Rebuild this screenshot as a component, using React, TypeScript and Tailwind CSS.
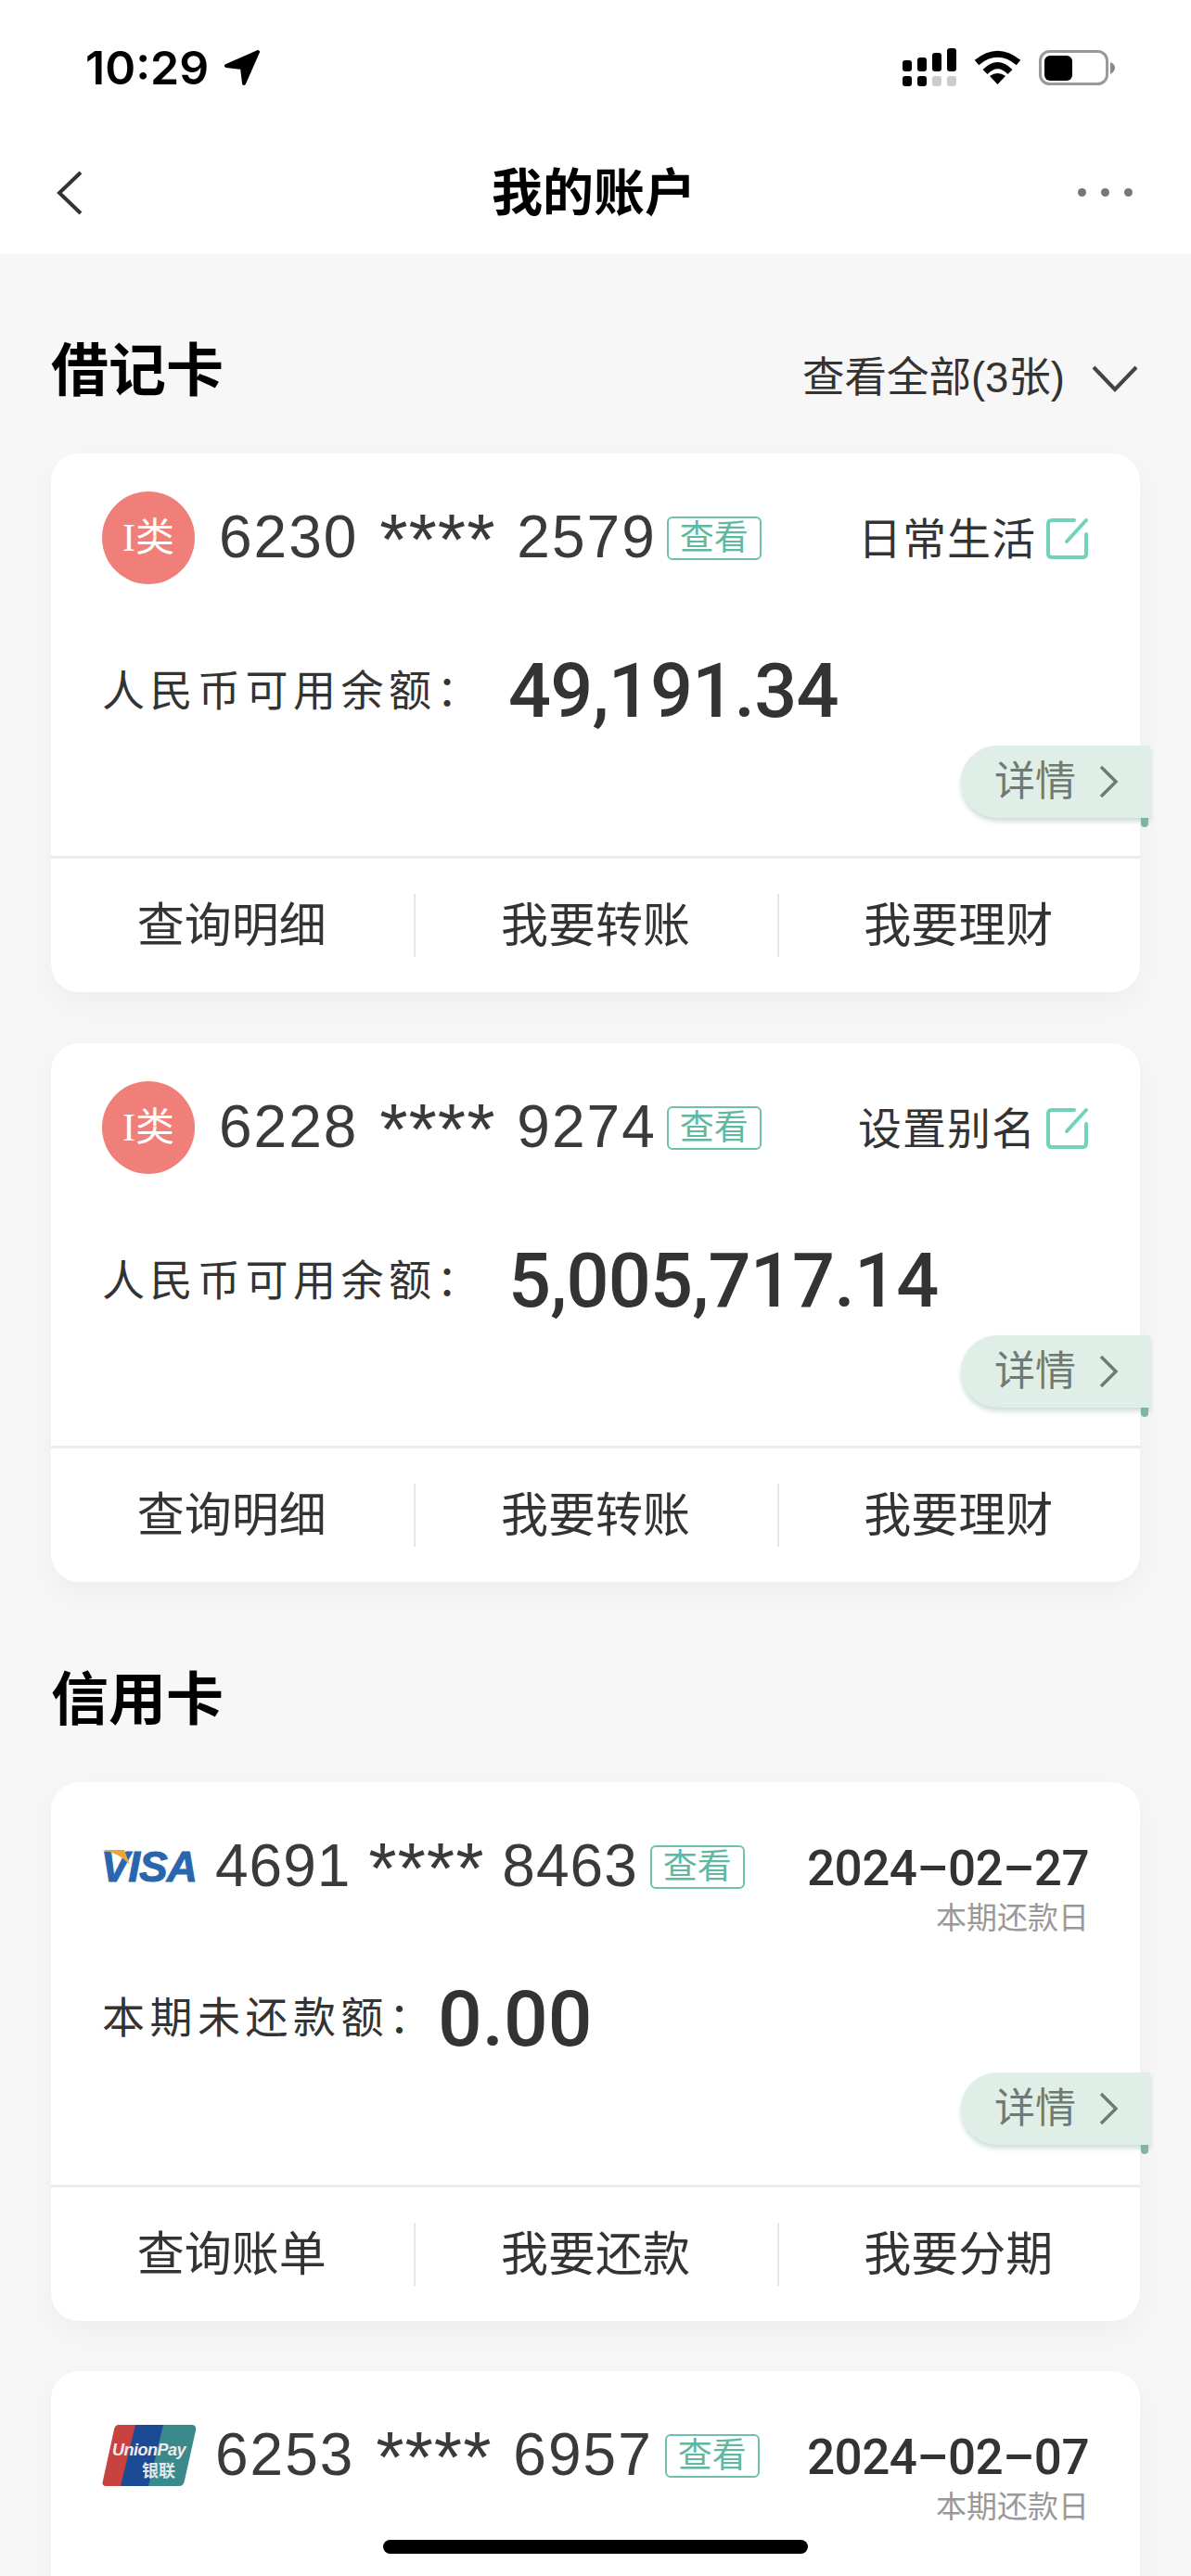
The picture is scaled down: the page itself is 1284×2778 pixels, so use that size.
type Account = {
  number: string;
  alias: string;
  label: string;
  amount: string;
  actions: string[];
};

const DEBIT_CARDS: Account[] = [
  {
    number: "6230 **** 2579",
    alias: "日常生活",
    label: "人民币可用余额：",
    amount: "49,191.34",
    actions: ["查询明细", "我要转账", "我要理财"],
  },
  {
    number: "6228 **** 9274",
    alias: "设置别名",
    label: "人民币可用余额：",
    amount: "5,005,717.14",
    actions: ["查询明细", "我要转账", "我要理财"],
  },
];

function StatusBar() {
  return (
    <div className="flex h-[145px] items-center justify-between pl-[92px] pr-[82px]">
      <div className="flex items-center gap-[16px]">
        <span className="font-['Inter',sans-serif] text-[50px] leading-none font-semibold text-black">10:29</span>
        <svg width="40" height="40" viewBox="0 0 40 40">
          <path d="M37 3 L3 18 L20 20 L22 37 Z" fill="#000" stroke="#000" strokeWidth="4" strokeLinejoin="round" />
        </svg>
      </div>
      <div className="flex items-center">
        <svg width="58" height="41" viewBox="0 0 58 41" className="mr-[19px]">
          <rect x="0" y="13" width="10" height="12" rx="3" fill="#000" />
          <rect x="16" y="10" width="10" height="15" rx="3" fill="#000" />
          <rect x="32" y="5" width="10" height="20" rx="3" fill="#000" />
          <rect x="48" y="0" width="10" height="25" rx="3" fill="#000" />
          <rect x="0" y="30" width="10" height="11" rx="3" fill="#000" />
          <rect x="16" y="30" width="10" height="11" rx="3" fill="#000" />
          <rect x="32" y="30" width="10" height="11" rx="3" fill="#ccc" />
          <rect x="48" y="30" width="10" height="11" rx="3" fill="#ccc" />
        </svg>
        <svg width="51" height="37" viewBox="0 0 51 37" className="mr-[19px]">
          <path d="M3 13.5 Q25.500 -5 48 13.500" fill="none" stroke="#000" strokeWidth="7" />
          <path d="M12 23.500 Q25.500 10 39 23.500" fill="none" stroke="#000" strokeWidth="7" />
          <path d="M25.500 37 L17 28 Q25.500 22 34 28 Z" fill="#000" />
        </svg>
        <svg width="82" height="38" viewBox="0 0 82 38">
          <rect x="1.500" y="1.500" width="72" height="35" rx="10" fill="#fff" stroke="#999" strokeWidth="3" />
          <rect x="6" y="6" width="30" height="27" rx="6" fill="#000" />
          <path d="M77 13 Q82 15 82 19 Q82 23 77 26 Z" fill="#888" />
        </svg>
      </div>
    </div>
  );
}

function NavBar() {
  return (
    <div className="flex h-[129px] items-start pl-[60px] pr-[63px]">
      <div className="w-[158px]">
        <svg width="30" height="50" viewBox="0 0 30 50" className="mt-[38px]">
          <path d="M27 3 L4 25 L27 47" fill="none" stroke="#333" strokeWidth="4" />
        </svg>
      </div>
      <h1 className="mt-[31px] flex-1 text-center text-[55px] leading-[64px] font-bold text-black">我的账户</h1>
      <div className="mt-[58px] flex w-[159px] justify-end gap-[16px]">
        <span className="size-[9px] rounded-full bg-[#777]" />
        <span className="size-[9px] rounded-full bg-[#777]" />
        <span className="size-[9px] rounded-full bg-[#777]" />
      </div>
    </div>
  );
}

function SectionTitle({ title, className }: { title: string; className: string }) {
  return <h2 className={`text-[62px] leading-[100px] font-bold text-black ${className}`}>{title}</h2>;
}

function ViewTag() {
  return (
    <span className="flex h-[47px] w-[102px] shrink-0 items-center justify-center rounded-[6px] border-2 border-[#6fc0ae] text-[37px] leading-none text-[#5fb9a2]">
      查看
    </span>
  );
}

function EditIcon() {
  return (
    <svg width="46" height="46" viewBox="0 0 46 46" className="ml-[11px]">
      <path
        d="M30 3 H6 Q2 3 2 7 V39 Q2 43 6 43 H39 Q43 43 43 39 V18"
        fill="none"
        stroke="#72d2bb"
        strokeWidth="4"
        strokeLinecap="round"
      />
      <path d="M22 26 L43 3" fill="none" stroke="#72d2bb" strokeWidth="4" strokeLinecap="round" />
    </svg>
  );
}

function DetailTab({ top }: { top: string }) {
  return (
    <div className={`absolute right-[-11px] ${top} flex h-[78px] w-[204px] items-center rounded-l-[39px] bg-[#dfefe7] pl-[36px] shadow-[0_4px_5px_rgba(120,160,145,0.35)]`}>
      <span className="text-[44px] leading-none text-[#6f7a75]">详情</span>
      <svg width="22" height="38" viewBox="0 0 22 38" className="ml-[24px]">
        <path d="M3 3 L19 19 L3 35" fill="none" stroke="#6f7a75" strokeWidth="3.500" />
      </svg>
      <span className="absolute right-[2px] top-full h-[10px] w-[8px] rounded-b-[4px] bg-[#7fb5a5]" />
    </div>
  );
}

function ActionRow({ actions }: { actions: string[] }) {
  return (
    <div className="grid h-[147px] grid-cols-3 items-center border-t-[3px] border-[#ececec]">
      {actions.map((action, index) => (
        <div
          key={action}
          className={`flex h-[68px] items-center justify-center pr-[2px] text-[51px] leading-none text-[#333] ${index > 0 ? "border-l-2 border-[#e6e6e6]" : ""}`}
        >
          {action}
        </div>
      ))}
    </div>
  );
}

function CardNumber({ number, tight = false }: { number: string; tight?: boolean }) {
  const [head, stars, tail] = number.split(" ");
  return (
    <span
      className={`block pt-[4px] font-['Liberation_Sans',sans-serif] text-[64px] leading-none whitespace-nowrap text-[#3a3a3a] ${tight ? "tracking-[1px] [word-spacing:0px]" : "tracking-[2px] [word-spacing:3px]"}`}
    >
      {head}{" "}
      <span className="align-[-8px] text-[78px] tracking-[1px]">{stars}</span>{" "}
      {tail}
    </span>
  );
}

function DebitCard({ account, className }: { account: Account; className: string }) {
  return (
    <section className={`relative rounded-[30px] bg-white shadow-[0_12px_34px_rgba(0,0,0,0.045)] ${className}`}>
      <div className="h-[434px] px-[55px] pt-[41px]">
        <div className="flex h-[100px] items-center">
          <div className="flex size-[100px] shrink-0 items-center justify-center rounded-full bg-[#ef7f78] text-white">
            <span className="font-['Liberation_Serif',serif] text-[42px] leading-none">I</span>
            <span className="text-[42px] leading-none">类</span>
          </div>
          <div className="ml-[26px] mr-[11px]">
            <CardNumber number={account.number} />
          </div>
          <ViewTag />
          <div className="ml-auto flex items-center pt-[2px]">
            <span className="text-[47px] leading-none tracking-[1px] text-[#333]">{account.alias}</span>
            <EditIcon />
          </div>
        </div>
        <div className="mt-[65px] flex h-[100px] items-center">
          <span className="w-[438px] shrink-0 text-[46px] leading-none tracking-[5.5px] whitespace-nowrap text-[#333]">{account.label}</span>
          <span className="font-['Roboto',sans-serif] text-[81px] leading-none font-medium tracking-[-0.8px] text-[#333]">
            {account.amount}
          </span>
        </div>
      </div>
      <DetailTab top="top-[315px]" />
      <ActionRow actions={account.actions} />
    </section>
  );
}

function VisaLogo() {
  return (
    <span className="relative flex h-[36px] w-[102px] shrink-0 items-center justify-end font-['Liberation_Sans',sans-serif] text-[46px] leading-none font-bold tracking-[-1px] text-[#2a66ae] italic [-webkit-text-stroke:1px_#2a66ae]">
      VISA
      <svg width="34" height="16" viewBox="0 0 34 16" className="absolute left-0 top-0">
        <path d="M0 0 H24 L30 16 Q18 3 0 0 Z" fill="#e9a63f" />
      </svg>
    </span>
  );
}

function UnionPayLogo() {
  return (
    <svg width="102" height="66" viewBox="0 0 102 66" className="shrink-0">
      <path d="M18 0 H42 L26 66 H5 Q-1 66 1 60 L13 5 Q14 0 18 0 Z" fill="#c8433f" />
      <path d="M36 0 H72 L56 66 H20 Z" fill="#1d4a94" />
      <path d="M66 0 H97 Q102 0 101 6 L89 60 Q88 66 83 66 H50 Z" fill="#3a8a8c" />
      <text x="11" y="33" fontFamily="Liberation Sans" fontSize="18" fontWeight="700" fontStyle="italic" fill="#f4e9ea" letterSpacing="-0.500">
        UnionPay
      </text>
      <text x="43" y="56" fontFamily="Noto Sans CJK SC" fontSize="18" fontWeight="700" fill="#dfe9ee">
        银联
      </text>
    </svg>
  );
}

function CreditCardHead({
  logo,
  number,
  date,
  tight = false,
}: {
  logo: React.ReactNode;
  number: string;
  date: string;
  tight?: boolean;
}) {
  return (
    <div className="flex h-[100px] items-start">
      <div className="mr-[20px] flex h-[100px] items-center">{logo}</div>
      <div className="mr-[13px] flex h-[100px] items-center">
        <CardNumber number={number} tight={tight} />
      </div>
      <div className="flex h-[100px] items-center">
        <ViewTag />
      </div>
      <div className="ml-auto mt-[22px] text-right">
        <div className="font-['Roboto',sans-serif] text-[53px] leading-[60px] font-medium tracking-[-0.5px] whitespace-nowrap text-[#333]">{date}</div>
        <div className="mt-[4px] text-[33px] leading-[40px] text-[#999]">本期还款日</div>
      </div>
    </div>
  );
}

export default function App() {
  return (
    <div className="relative h-[2778px] w-[1284px] overflow-hidden bg-[#f7f7f7] font-['Liberation_Sans','Noto_Sans_CJK_SC',sans-serif]">
      <header className="bg-white">
        <StatusBar />
        <NavBar />
      </header>

      <main className="px-[55px]">
        <div className="flex items-start justify-between pt-[77px]">
          <SectionTitle title="借记卡" className="" />
          <div className="mt-[31px] flex items-center">
            <span className="text-[45.5px] leading-[52px] text-[#333]">查看全部(3张)</span>
            <svg width="52" height="30" viewBox="0 0 52 30" className="ml-[28px] mr-[1px]">
              <path d="M3 3 L26 27 L49 3" fill="none" stroke="#444" strokeWidth="4" />
            </svg>
          </div>
        </div>

        <DebitCard account={DEBIT_CARDS[0]} className="mt-[38px]" />
        <DebitCard account={DEBIT_CARDS[1]} className="mt-[55px]" />

        <SectionTitle title="信用卡" className="mt-[78px]" />

        <section className="relative mt-[38px] rounded-[30px] bg-white shadow-[0_12px_34px_rgba(0,0,0,0.045)]">
          <div className="h-[434px] px-[55px] pt-[41px]">
            <CreditCardHead logo={<VisaLogo />} number="4691 **** 8463" date="2024–02–27" tight />
            <div className="mt-[63px] flex h-[100px] items-center">
              <span className="w-[362px] shrink-0 text-[46px] leading-none tracking-[5.5px] whitespace-nowrap text-[#333]">本期未还款额：</span>
              <span className="pt-[3px] font-['Roboto',sans-serif] text-[84px] leading-none font-medium text-[#333]">0.00</span>
            </div>
          </div>
          <DetailTab top="top-[313px]" />
          <ActionRow actions={["查询账单", "我要还款", "我要分期"]} />
        </section>

        <section className="mt-[54px] h-[400px] rounded-[30px] bg-white shadow-[0_12px_34px_rgba(0,0,0,0.045)]">
          <div className="px-[55px] pt-[41px]">
            <CreditCardHead logo={<UnionPayLogo />} number="6253 **** 6957" date="2024–02–07" />
          </div>
        </section>
      </main>

      <div className="absolute bottom-[24px] left-[413px] h-[15px] w-[458px] rounded-full bg-black" />
    </div>
  );
}
